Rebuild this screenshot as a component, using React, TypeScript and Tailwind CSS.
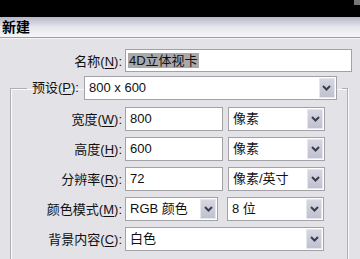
import React from 'react'

const font = "font-['Liberation_Sans','Noto_Sans_CJK_SC',sans-serif]"

function Chevron() {
  return (
    <svg width="9" height="6" viewBox="0 0 9 6" fill="none">
      <path d="M1 1l3.5 3.5L8 1" stroke="#3c3c4c" strokeWidth={2} />
    </svg>
  )
}

function Label({ text, hot }: { text: string; hot: string }) {
  return (
    <span className="text-[13px] text-[#111] whitespace-nowrap">
      {text}(<span className="underline underline-offset-2">{hot}</span>):
    </span>
  )
}

function Select({ value, w, className = '' }: { value: string; w: string; className?: string }) {
  return (
    <div className={`${w} ${className} h-[24px] bg-white border border-[#a2a2a6] flex items-center`}>
      <span className="flex-1 pl-[4px] text-[13px] text-[#111] whitespace-nowrap overflow-hidden">{value}</span>
      <div className="w-[16px] h-[20px] mr-[1px] bg-gradient-to-b from-[#d6d7e2] to-[#bfc1cf] border border-[#e6e7ee] flex items-center justify-center">
        <Chevron />
      </div>
    </div>
  )
}

function Input({ value, w }: { value: string; w: string }) {
  return (
    <div className={`${w} h-[24px] bg-white border border-[#a2a2a6] flex items-center pl-[4px] text-[13px] text-[#111]`}>
      {value}
    </div>
  )
}

function Row({ text, hot, children }: { text: string; hot: string; children: React.ReactNode }) {
  return (
    <div className="flex items-center h-[24px]">
      <div className="w-[111px] text-right mr-[3px]">
        <Label text={text} hot={hot} />
      </div>
      <div className="flex items-center gap-[5px]">{children}</div>
    </div>
  )
}

export default function App() {
  return (
    <div className={`w-[360px] h-[259px] overflow-hidden bg-[#e3e2e6] ${font}`}>
      <div className="h-[17px] bg-black flex justify-end items-start">
        <div className="w-[6px] h-[5px] bg-[#777]" />
      </div>
      <div className="h-[20px] bg-gradient-to-b from-[#b6b6c8] via-[#e6e6ee] to-[#f6f6f8] flex items-center pl-[2px]">
        <span className="text-[14px] font-bold text-black leading-none">新建</span>
      </div>
      <div className="h-[1px] bg-[#9d9da3]" />
      <div className="h-[1px] bg-[#f4f4f6]" />

      <div className="flex items-center h-[23px] mt-[10px]">
        <div className="w-[122px] text-right mr-[3px]">
          <Label text="名称" hot="N" />
        </div>
        <div className="w-[227px] h-[23px] bg-white border border-[#a2a2a6] flex items-center pl-[2px]">
          <span className="bg-[#a9a9ab] text-[13px] text-[#111] px-[1px] leading-[15px]">4D立体视卡</span>
        </div>
      </div>

      <fieldset className="ml-[10px] mt-[4px] w-[338px] border border-[#b0b0b4] shadow-[inset_1px_1px_0_#fafafa,1px_1px_0_#fafafa] pb-[20px]">
        <legend className="ml-[16px] px-[5px]">
          <div className="flex items-center h-[24px] gap-[5px]">
            <Label text="预设" hot="P" />
            <Select value="800 x 600" w="w-[253px]" />
          </div>
        </legend>
        <div className="flex flex-col gap-[6px] mt-[7px]">
          <Row text="宽度" hot="W">
            <Input value="800" w="w-[98px]" />
            <Select value="像素" w="w-[97px]" />
          </Row>
          <Row text="高度" hot="H">
            <Input value="600" w="w-[98px]" />
            <Select value="像素" w="w-[97px]" />
          </Row>
          <Row text="分辨率" hot="R">
            <Input value="72" w="w-[98px]" />
            <Select value="像素/英寸" w="w-[97px]" />
          </Row>
          <Row text="颜色模式" hot="M">
            <Select value="RGB 颜色" w="w-[93px]" />
            <Select value="8 位" w="w-[97px]" className="ml-[4px]" />
          </Row>
          <Row text="背景内容" hot="C">
            <Select value="白色" w="w-[199px]" />
          </Row>
        </div>
      </fieldset>
    </div>
  )
}
